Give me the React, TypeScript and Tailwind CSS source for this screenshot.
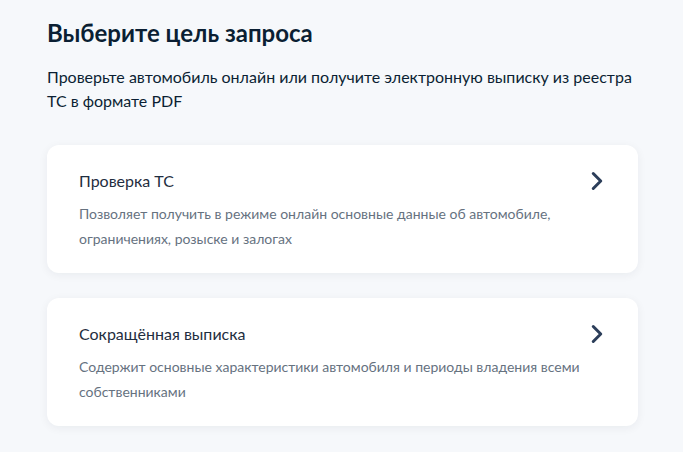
import { ChevronRight } from 'lucide-react';

type Option = { title: string; text: string };

const options: Option[] = [
  {
    title: 'Проверка ТС',
    text: 'Позволяет получить в режиме онлайн основные данные об автомобиле, ограничениях, розыске и залогах',
  },
  {
    title: 'Сокращённая выписка',
    text: 'Содержит основные характеристики автомобиля и периоды владения всеми собственниками',
  },
];

function OptionCard({ option }: { option: Option }) {
  return (
    <article className="flex items-start justify-between rounded-xl bg-white pb-[22px] pl-8 pr-[26px] pt-6 shadow-[0_2px_10px_rgba(11,31,51,0.06)]">
      <div className="max-w-[512px]">
        <h3 className="text-[16px] leading-6 text-[#1f2e40]">{option.title}</h3>
        <p className="mt-2 text-[14px] leading-[25px] text-[#66727f]">{option.text}</p>
      </div>
      <ChevronRight className="-mt-[3px] shrink-0 text-[#2c3e5a]" size={30} strokeWidth={2.4} />
    </article>
  );
}

export default function App() {
  return (
    <div className="min-h-[452px] bg-[#f6f8fb] pl-[47px] pr-[45px] pt-[17px] font-['Lato','Noto_Sans',sans-serif]">
      <h1 className="text-[24px] font-bold leading-8 text-[#0b1f33]">Выберите цель запроса</h1>
      <p className="mt-[16px] text-[16px] leading-6 text-[#0b1f33]">
        Проверьте автомобиль онлайн или получите электронную выписку из реестра ТС в формате PDF
      </p>
      <div className="mt-[32px] flex flex-col gap-[25px]">
        {options.map((o) => <OptionCard key={o.title} option={o} />)}
      </div>
    </div>
  );
}
